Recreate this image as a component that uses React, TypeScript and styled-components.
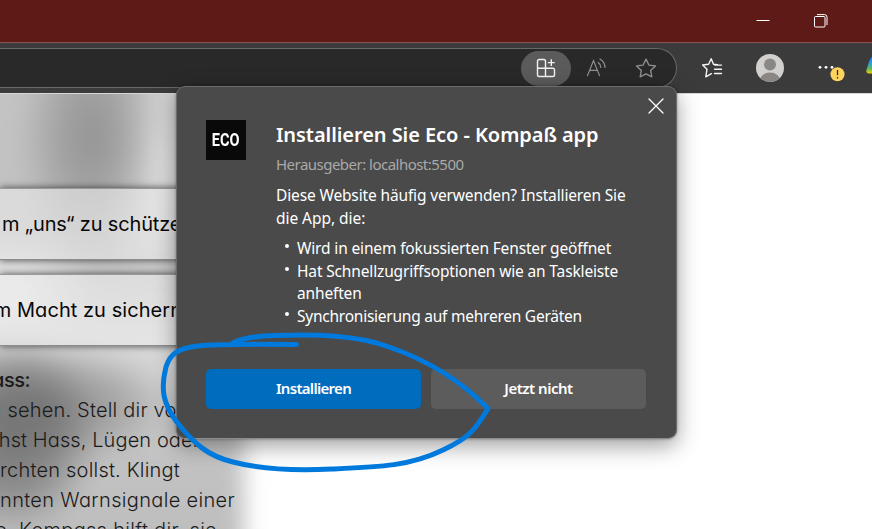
import React from "react";
import styled, { createGlobalStyle } from "styled-components";

const GlobalStyle = createGlobalStyle`
  * { box-sizing: border-box; }
  html, body { margin: 0; padding: 0; background: #fff; overflow: hidden; }
  body { font-family: "Noto Sans", "Open Sans", sans-serif; }
`;

const Window = styled.div`
  position: relative;
  width: 872px;
  height: 529px;
  overflow: hidden;
  display: flex;
  flex-direction: column;
`;

const TitleBar = styled.header`
  flex: 0 0 43px;
  display: flex;
  justify-content: flex-end;
  align-items: center;
  gap: 44px;
  padding-right: 44px;
  background: #5e1a17;
  border-bottom: 1px solid #8a5250;
`;

const Toolbar = styled.nav`
  flex: 0 0 50px;
  display: flex;
  background: #3b3b3b;
`;

const AddressBar = styled.div`
  flex: none;
  width: 677px;
  height: 40px;
  margin-top: 5px;
  display: flex;
  justify-content: flex-end;
  align-items: center;
  padding-right: 5px;
  background: #292929;
  border: 1px solid #686868;
  border-left: 0;
  border-radius: 0 20px 20px 0;
`;

const AddressButton = styled.button<{ $active?: boolean }>`
  width: 50px;
  height: 35px;
  padding: 0;
  border: 0;
  border-radius: 18px;
  display: grid;
  place-items: center;
  color: ${(p) => (p.$active ? "#f2f2f2" : "#929292")};
  background: ${(p) => (p.$active ? "#5b5b5b" : "transparent")};
`;

const Actions = styled.div`
  flex: 1;
  display: flex;
  align-items: center;
  padding-left: 24px;
`;

const FavoritesIcon = styled.svg`
  flex: none;
  margin-right: 33px;
`;

const Avatar = styled.svg`
  flex: none;
  margin-right: 33px;
`;

const MoreIcon = styled.svg`
  flex: none;
  margin-right: 21px;
  margin-top: 8px;
`;

const CopilotIcon = styled.svg`
  flex: none;
  margin-top: -7px;
`;

const Page = styled.main`
  position: relative;
  flex: 1;
  background: #fff;
  border-top: 1px solid #d8d8d8;
  overflow: hidden;
`;

const Backdrop = styled.div`
  position: absolute;
  inset: -30px auto -30px -30px;
  width: 274px;
  filter: blur(11px);
  background:
    radial-gradient(ellipse 75px 130px at 122px 72px, #949494 0%, rgba(150,150,150,0.75) 40%, rgba(160,160,160,0) 100%),
    radial-gradient(ellipse 65px 130px at 190px 100px, #e4e4e4 0%, rgba(228,228,228,0) 100%),
    radial-gradient(ellipse 90px 55px at 40px 225px, #f0f0f0 0%, rgba(240,240,240,0) 100%),
    radial-gradient(ellipse 130px 62px at 78px 340px, rgba(100,100,100,0.6) 0%, rgba(110,110,110,0.45) 50%, rgba(150,150,150,0) 100%),
    radial-gradient(ellipse 88px 100px at 42px 372px, rgba(95,95,95,0.75) 0%, rgba(100,100,100,0.6) 50%, rgba(150,150,150,0) 100%),
    linear-gradient(#c4c4c4, #c0c0c0 40%, #dadada 55%, #d2d2d2 65%, #c2c2c2 80%, #bdbdbd);
`;

const Article = styled.article`
  position: relative;
  width: 245px;
  padding-top: 94px;
  display: flex;
  flex-direction: column;
  font-family: Inter, sans-serif;
  font-feature-settings: "cv11";
  color: #1b1b1b;
`;

const Card = styled.section<{ $gap: number; $inset: number }>`
  height: 72px;
  margin-bottom: ${(p) => p.$gap}px;
  padding-right: ${(p) => p.$inset}px;
  display: flex;
  align-items: center;
  justify-content: flex-end;
  background: rgba(236, 236, 236, 0.58);
  box-shadow: 0 0 7px rgba(0, 0, 0, 0.65);
  border-top: 1px solid #999;
  border-bottom: 1px solid #8d8d8d;
`;

const CardText = styled.span<{ $ls: number }>`
  font-size: 20px;
  line-height: 30px;
  white-space: pre;
  letter-spacing: ${(p) => p.$ls}px;
  color: #080808;
`;

const Line = styled.p<{ $end: number; $ls: number; $bold?: boolean }>`
  margin: 0;
  width: ${(p) => p.$end}px;
  height: 30px;
  display: flex;
  justify-content: flex-end;
  font-size: 20px;
  line-height: 30px;
  font-weight: ${(p) => (p.$bold ? 500 : 300)};
  letter-spacing: ${(p) => p.$ls}px;
  white-space: pre;
`;

const Dialog = styled.section`
  position: absolute;
  left: 176px;
  top: 86px;
  width: 501px;
  height: 353px;
  padding: 33px 30px 29px 29px;
  display: flex;
  flex-direction: column;
  justify-content: space-between;
  background: #4a4a4a;
  border: 1px solid #6d6d6d;
  border-bottom-color: #8c8c8c;
  border-radius: 9px;
  box-shadow: 0 7px 22px rgba(0, 0, 0, 0.38), 0 0 3px rgba(0, 0, 0, 0.35);
  color: #fff;
`;

const CloseButton = styled.button`
  position: absolute;
  right: 12px;
  top: 11px;
  padding: 0;
  border: 0;
  width: 16px;
  height: 16px;
  background: none;
  color: #fff;
`;

const DialogBody = styled.div`
  display: flex;
  gap: 30px;
`;

const AppIcon = styled.div`
  width: 40px;
  height: 40px;
  flex: none;
  display: grid;
  place-items: center;
  background: #090909;
  color: #fff;
  font: 700 17.5px/40px Roboto, sans-serif;
`;

const AppIconText = styled.span`
  transform: scaleX(0.83);
`;

const Copy = styled.div`
  flex: 1;
  white-space: nowrap;
`;

const Title = styled.h1`
  margin: 1px 0 0;
  font: 600 20px/28px "Noto Sans", sans-serif;
  letter-spacing: -0.06px;
`;

const Publisher = styled.div`
  margin-top: 4px;
  font-size: 15px;
  line-height: 22px;
  letter-spacing: -0.52px;
  color: #a9a9a9;
`;

const Text = styled.div<{ $ls: number }>`
  font-size: 15.5px;
  line-height: 22.6px;
  letter-spacing: ${(p) => p.$ls}px;
`;

const Intro = styled.div`
  margin-top: 9px;
`;

const List = styled.ul`
  margin: 7.800px 0 0;
  padding: 0;
  list-style: none;
`;

const Item = styled.li`
  display: grid;
  grid-template-columns: 21px 1fr;
  &::before {
    content: "";
    width: 4px;
    height: 4px;
    border-radius: 50%;
    background: #fff;
    margin: 7px 0 0 9px;
  }
`;

const Buttons = styled.div`
  display: grid;
  grid-template-columns: 215px 215px;
  gap: 10px;
`;

const Button = styled.button<{ $primary?: boolean }>`
  height: 40px;
  padding: 0 0 2px;
  border: 0;
  border-radius: 5px;
  background: ${(p) => (p.$primary ? "#006cbe" : "#5c5c5c")};
  color: #fff;
  font: 600 15px/38px "Noto Sans", sans-serif;
  letter-spacing: ${(p) => (p.$primary ? -0.7 : -0.5)}px;
`;

const Annotation = styled.svg`
  position: absolute;
  left: 0;
  top: 0;
  pointer-events: none;
`;

const StarPath = "M10 1.4l2.6 5.4 6 .8-4.4 4.1 1.1 5.9L10 14.8l-5.3 2.8 1.1-5.9L1.4 7.6l6-.8z";

export default function App() {
  return (
    <Window>
      <GlobalStyle />
      <TitleBar>
        <svg width="14" height="14" viewBox="0 0 14 14">
          <path d="M.5 6.5h13" stroke="#fff" />
        </svg>
        <svg width="14" height="14" viewBox="0 0 14 14" fill="none" stroke="#fff">
          <rect x=".5" y="2.5" width="10.5" height="10.5" rx="1" />
          <path d="M3 .6h7.5a2.5 2.5 0 0 1 2.5 2.5V11" />
        </svg>
      </TitleBar>
      <Toolbar>
        <AddressBar>
          <AddressButton $active aria-label="App installieren">
            <svg width="20" height="20" viewBox="0 0 20 20" fill="none" stroke="currentColor" strokeWidth="1.4">
              <path d="M9.5 10.2V3.3Q9.5 1.5 7.7 1.5H3.3Q1.5 1.5 1.5 3.3v13.4q0 1.8 1.8 1.8h13.4q1.8 0 1.8-1.8V12q0-1.8-1.8-1.8H1.5M9.5 10.2v8.3M15.3 1.2v6.8M11.9 4.600h6.800" />
            </svg>
          </AddressButton>
          <AddressButton aria-label="Laut vorlesen">
            <svg width="21" height="20" viewBox="0 0 21 20" fill="none" stroke="currentColor" strokeWidth="1.2" strokeLinecap="round">
              <path d="M1.5 17.6L7.5 2.6l6 15M3.7 12.3h7.6" />
              <path d="M12.3 4.4q2.5 1.8 2.5 5M14 1q5 3 5 8.5" />
            </svg>
          </AddressButton>
          <AddressButton aria-label="Favorit hinzufügen">
            <svg width="22" height="22" viewBox="0 0 20 19" fill="none" stroke="currentColor" strokeWidth="1.2" strokeLinejoin="round">
              <path d={StarPath} />
            </svg>
          </AddressButton>
        </AddressBar>
        <Actions>
          <FavoritesIcon width="22" height="22" viewBox="0 0 22 22" fill="none" stroke="#f5f5f5" strokeWidth="1.4" strokeLinejoin="round" strokeLinecap="round">
            <path d="M16.5 7.8l-4-.6L10.2 1.7 7.6 7.3l-6 .7 4.4 4.2-1.2 7.6 5.6-3.1M13.5 8.1h7M13.5 12.3h7M13.5 16.5h7" />
          </FavoritesIcon>
          <Avatar width="28" height="28" viewBox="0 0 28 28">
            <defs>
              <clipPath id="avatar"><circle cx="14" cy="14" r="14" /></clipPath>
            </defs>
            <g clipPath="url(#avatar)">
              <rect width="28" height="28" fill="#d2d0ce" />
              <circle cx="14" cy="10.5" r="6" fill="#8b8784" />
              <ellipse cx="14" cy="26" rx="10" ry="7.5" fill="#8b8784" />
            </g>
          </Avatar>
          <MoreIcon width="28" height="20" viewBox="0 0 28 20">
            <g fill="#fff">
              <circle cx="3" cy="5.3" r="1.4" />
              <circle cx="9" cy="5.3" r="1.4" />
              <circle cx="15" cy="5.3" r="1.4" />
            </g>
            <circle cx="20.5" cy="12.3" r="7" fill="#ffd45e" />
            <path d="M20.5 8v5.2M20.5 15v1.5" stroke="#332d1c" strokeWidth="1.3" />
          </MoreIcon>
          <CopilotIcon width="10" height="20" viewBox="0 0 10 20">
            <defs>
              <linearGradient id="copilot" x1="0" y1="0" x2="0" y2="1">
                <stop offset="0" stopColor="#1467d8" />
                <stop offset=".4" stopColor="#1c9ee8" />
                <stop offset=".72" stopColor="#54b865" />
                <stop offset="1" stopColor="#efd000" />
              </linearGradient>
            </defs>
            <path d="M10 0H8C5 1 4 4 2 10L.3 15.5Q0 18.5 2.5 18.5H10z" fill="url(#copilot)" />
          </CopilotIcon>
        </Actions>
      </Toolbar>
      <Page>
        <Backdrop />
        <Article>
          <Card $gap={14} $inset={52}><CardText $ls={-0.16}>m „uns“ zu schützen</CardText></Card>
          <Card $gap={19} $inset={63}><CardText $ls={0.05}>m Macht zu sichern</CardText></Card>
          <Line $end={30} $ls={-0.5} $bold>ass:</Line>
          <Line $end={184} $ls={0.2}>u sehen. Stell dir vor</Line>
          <Line $end={200} $ls={0.1}>hst Hass, Lügen oder</Line>
          <Line $end={180} $ls={0.2}>rchten sollst. Klingt</Line>
          <Line $end={235} $ls={0.33}>nnten Warnsignale einer</Line>
          <Line $end={217} $ls={0.3}>e. Kompass hilft dir, sie</Line>
        </Article>
      </Page>
      <Dialog>
        <CloseButton aria-label="Schließen">
          <svg width="16" height="16" viewBox="0 0 16 16" fill="none" stroke="currentColor" strokeWidth="1.3" strokeLinecap="round">
            <path d="M1 1l14 14M15 1L1 15" />
          </svg>
        </CloseButton>
        <DialogBody>
          <AppIcon><AppIconText>ECO</AppIconText></AppIcon>
          <Copy>
            <Title>Installieren Sie Eco - Kompaß app</Title>
            <Publisher>Herausgeber: localhost:5500</Publisher>
            <Intro>
              <Text $ls={-0.14}>Diese Website häufig verwenden? Installieren Sie</Text>
              <Text $ls={-0.05}>die App, die:</Text>
            </Intro>
            <List>
              <Item><Text $ls={-0.15}>Wird in einem fokussierten Fenster geöffnet</Text></Item>
              <Item><Text $ls={-0.15}>Hat Schnellzugriffsoptionen wie an Taskleiste<br />anheften</Text></Item>
              <Item><Text $ls={-0.24}>Synchronisierung auf mehreren Geräten</Text></Item>
            </List>
          </Copy>
        </DialogBody>
        <Buttons>
          <Button $primary>Installieren</Button>
          <Button>Jetzt nicht</Button>
        </Buttons>
      </Dialog>
      <Annotation width="872" height="529" viewBox="0 0 872 529" fill="none" stroke="#0079dc" strokeWidth="5" strokeLinecap="round" strokeLinejoin="round">
        <path d="M296.5 344.5C250 344 218 344 198 346C178 348 170 354 166 367C160 391 164 404 176 421C194 444 208 456 233 462C264 470 295 471 332 469C380 467 410 466 443 450C470 437 475 430 488 408.5C464 384 430 361 389 347C357 335 317 334 275 335.5C253 336 241 339 233 343" />
      </Annotation>
    </Window>
  );
}
